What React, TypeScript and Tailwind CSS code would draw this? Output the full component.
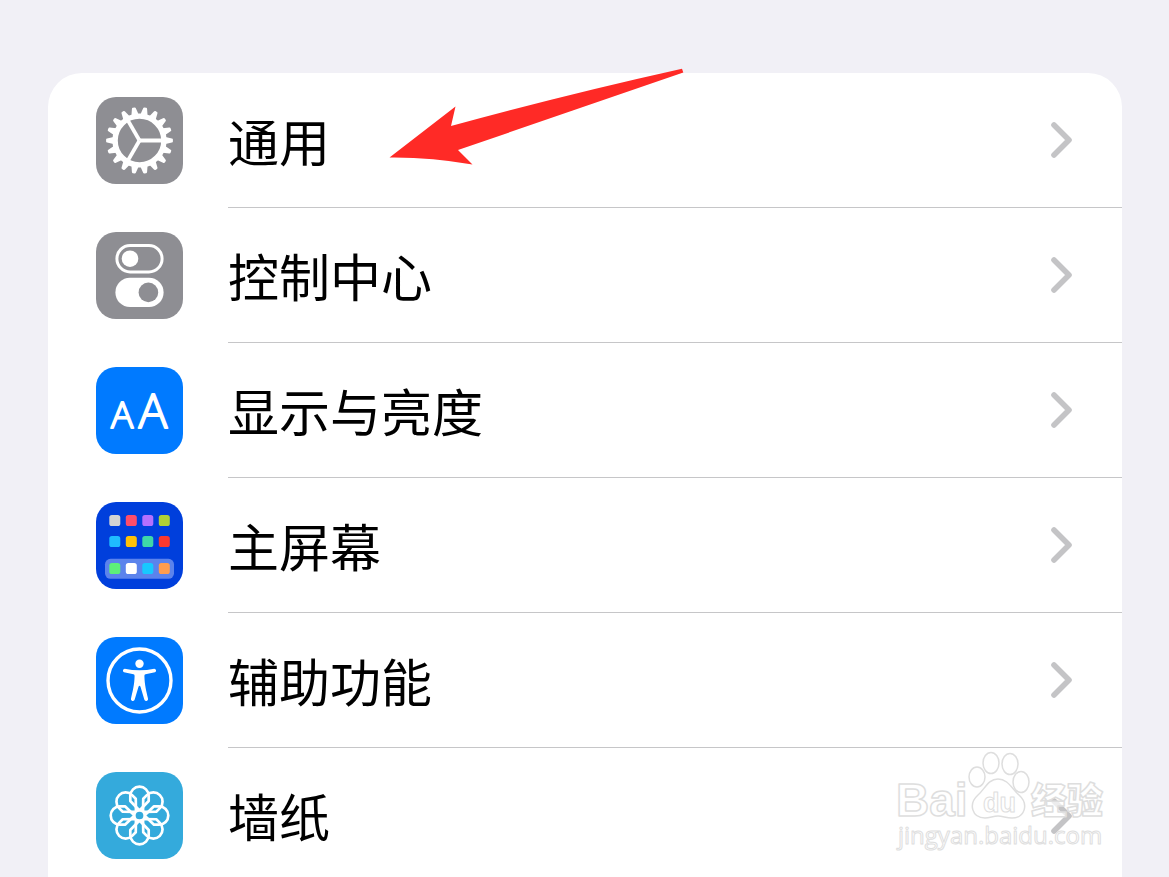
import type { ReactNode } from "react";

const TEETH = Array.from({ length: 18 }, (_, i) => i * 20);
const PETALS = [0, 45, 90, 135, 180, 225, 270, 315];
const SPOKES = [0, 120, 240];

const HOME_ROWS = [
  { y: 13, colors: ["#d3d3d3", "#ff4d6a", "#b370ff", "#b0d136"] },
  { y: 34, colors: ["#1fbcff", "#ffc107", "#3ed8a8", "#fb382e"] },
  { y: 61, colors: ["#5df07a", "#ffffff", "#18c8ff", "#ff9d4d"] },
];

function GearIcon() {
  return (
    <svg viewBox="0 0 87 87" className="size-full">
      <g transform="translate(43.5 43.5)" fill="#fff">
        {TEETH.map((a) => (
          <path key={a} d="M26 -3.6 L32.4 -2 Q33.4 -1.8 33.4 -0.9 V0.9 Q33.4 1.8 32.4 2 L26 3.6 Z" transform={`rotate(${a})`} />
        ))}
        <circle r="24.4" fill="none" stroke="#fff" strokeWidth="5.4" />
        {SPOKES.map((a) => (
          <path key={a} d="M0 0 H23" stroke="#fff" strokeWidth="3.8" transform={`rotate(${a})`} />
        ))}
      </g>
    </svg>
  );
}

function TogglesIcon() {
  return (
    <svg viewBox="0 0 87 87" className="size-full">
      <rect x="20.9" y="13.5" width="45.2" height="26.4" rx="13.2" fill="none" stroke="#fff" strokeWidth="3" />
      <circle cx="34" cy="26.7" r="8.3" fill="#fff" />
      <rect x="19.4" y="45.7" width="48.2" height="29.3" rx="14.6" fill="#fff" />
      <circle cx="52.4" cy="60.4" r="9.8" fill="#8e8e93" />
    </svg>
  );
}

function TextSizeIcon() {
  return (
    <svg viewBox="0 0 87 87" className="size-full font-['Open_Sans',sans-serif] font-light" fill="#fff" stroke="#fff" strokeWidth="1.8" strokeLinejoin="round">
      <text x="26" y="61" fontSize="37" textAnchor="middle">A</text>
      <text x="57" y="61" fontSize="48" textAnchor="middle">A</text>
    </svg>
  );
}

function HomeIcon() {
  return (
    <svg viewBox="0 0 87 87" className="size-full">
      <rect x="9" y="56.8" width="69" height="20" rx="5.5" fill="#5b83ec" />
      {HOME_ROWS.map((row) =>
        row.colors.map((color, i) => (
          <rect key={color} x={13.3 + i * 16.5} y={row.y} width="11" height="11" rx="2.6" fill={color} />
        ))
      )}
    </svg>
  );
}

function PersonIcon() {
  return (
    <svg viewBox="0 0 87 87" className="size-full">
      <circle cx="43.5" cy="43.5" r="31.5" fill="none" stroke="#fff" strokeWidth="3.4" />
      <circle cx="43.5" cy="26.8" r="4.2" fill="#fff" />
      <path
        d="M28.7 31.7 Q36 33.2 43.5 33.2 T58.3 31.7 A1.9 1.9 0 0 1 59 35.3 L49.5 37.2 Q48.3 37.5 48.4 39 C48.6 48 50.3 54 52 61.5 A1.9 1.9 0 0 1 48.3 62.6 L44.5 49.8 Q43.5 47.5 42.5 49.8 L38.7 62.6 A1.9 1.9 0 0 1 35 61.5 C36.7 54 38.4 48 38.6 39 Q38.7 37.5 37.5 37.2 L28 35.3 A1.9 1.9 0 0 1 28.7 31.7 Z"
        fill="#fff"
      />
    </svg>
  );
}

function FlowerIcon() {
  return (
    <svg viewBox="0 0 87 87" className="size-full">
      <g transform="translate(43.5 43.5)" fill="none" stroke="#fff" strokeWidth="2.7" strokeLinejoin="round">
        {PETALS.map((a) => (
          <path key={a} d="M0 -5 L-9.2 -14.5 V-19.6 A9.2 9.2 0 0 1 9.2 -19.6 V-14.5 Z" transform={`rotate(${a})`} />
        ))}
        <circle r="5.2" fill="#34aadc" />
      </g>
    </svg>
  );
}

function Chevron() {
  return (
    <svg viewBox="0 0 24 38" className="h-[38px] w-6 shrink-0" fill="none" stroke="#c4c4c6" strokeWidth="5.6" strokeLinecap="round" strokeLinejoin="round">
      <path d="M4 4 L19 19 L4 34" />
    </svg>
  );
}

function Arrow() {
  return (
    <svg viewBox="0 0 310 110" className="pointer-events-none absolute -top-[13px] left-[332px] h-[110px] w-[310px]">
      <path d="M9.5 97.5 L75.5 46.5 L71 66 Q188 34 302 8.7 L303.3 12.6 L78 90 L92.5 104.5 Q50 97 9.5 97.5 Z" fill="#ff2a26" />
    </svg>
  );
}

function Watermark() {
  return (
    <svg
      viewBox="0 0 240 130"
      className="pointer-events-none absolute right-[49px] bottom-[7px] h-[130px] w-60"
      fill="#fff"
      stroke="#dedede"
      strokeWidth="1.5"
      strokeLinejoin="round"
    >
      <text x="16" y="76" fontSize="46" className="font-['Liberation_Sans',sans-serif] font-bold">Bai</text>
      <ellipse cx="97" cy="37" rx="8" ry="10" />
      <ellipse cx="111" cy="23" rx="8" ry="10.5" />
      <ellipse cx="130" cy="24" rx="8" ry="10.5" />
      <ellipse cx="141" cy="42" rx="8" ry="10.5" />
      <path d="M118 39 C128 39 132 49 139 55 C149 64 145 78 132 78 C126 78 123 76 118 76 C113 76 110 78 105 78 C92 78 88 64 98 55 C105 49 108 39 118 39 Z" />
      <text x="103" y="72" fontSize="27" strokeWidth="1" className="font-['Liberation_Sans',sans-serif] font-bold">du</text>
      <text x="151" y="74" fontSize="36" fillOpacity="0.7" className="font-['Noto_Sans_CJK_SC',sans-serif] font-black">经验</text>
      <text x="18" y="104" fontSize="24" strokeWidth="1" fillOpacity="0.3" className="font-['Open_Sans',sans-serif] font-medium">jingyan.baidu.com</text>
    </svg>
  );
}

type Item = { label: string; tile: string; icon: ReactNode };

const items: Item[] = [
  { label: "通用", tile: "bg-[#8e8e93]", icon: <GearIcon /> },
  { label: "控制中心", tile: "bg-[#8e8e93]", icon: <TogglesIcon /> },
  { label: "显示与亮度", tile: "bg-[#007aff]", icon: <TextSizeIcon /> },
  { label: "主屏幕", tile: "bg-[#003fdc]", icon: <HomeIcon /> },
  { label: "辅助功能", tile: "bg-[#007aff]", icon: <PersonIcon /> },
  { label: "墙纸", tile: "bg-[#34aadc]", icon: <FlowerIcon /> },
];

function Row({ label, tile, icon }: Item) {
  return (
    <li className="group">
      <a href="#" className="flex h-[135px] items-center gap-[45px] pl-12">
        <span className={`size-[87px] shrink-0 overflow-hidden rounded-[20px] ${tile}`}>{icon}</span>
        <span className="flex flex-1 items-center justify-between self-stretch border-b border-[#c6c6c8] pr-12 group-last:border-b-0">
          <span className="text-[51px] leading-none text-black">{label}</span>
          <Chevron />
        </span>
      </a>
    </li>
  );
}

export default function App() {
  return (
    <main className="relative h-screen overflow-hidden bg-[#f1f0f6] pt-[73px] pr-[47px] pl-12 font-['Noto_Sans_CJK_SC',sans-serif]">
      <nav className="relative rounded-t-[34px] bg-white">
        <ul>
          {items.map((item) => (
            <Row key={item.label} {...item} />
          ))}
        </ul>
        <Arrow />
      </nav>
      <Watermark />
    </main>
  );
}
